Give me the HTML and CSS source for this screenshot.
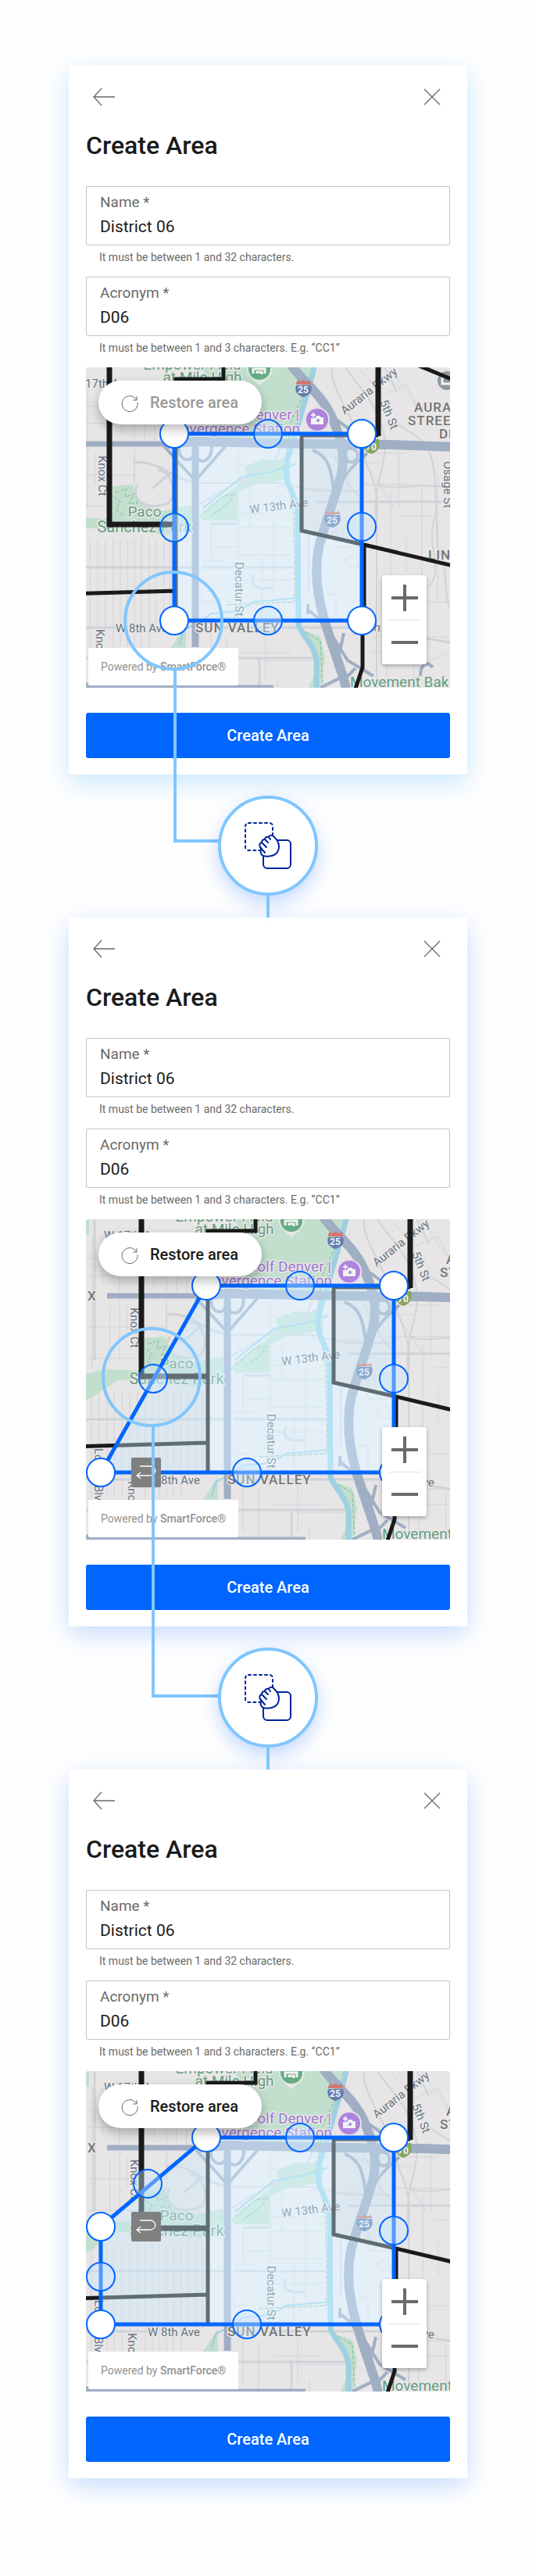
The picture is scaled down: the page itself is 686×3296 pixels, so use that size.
FILE: index.html
```html
<!DOCTYPE html>
<html lang="en">
<head>
<meta charset="utf-8">
<meta name="viewport" content="width=device-width, initial-scale=1">
<title>Create Area</title>
<link rel="stylesheet" href="styles.css">
</head>
<body>

<template id="city-map">
  <svg>
    <g class="city">
      <rect class="land" x="-60" y="-10" width="560" height="430"/>
      <!-- parks -->
      <path class="park" d="M150 -5H296C288 30 278 60 268 96H170L160 60Z"/>
      <path class="park" d="M34 152L60 150L64 166L78 178L100 184L135 176V208L100 214L40 206H0L-41 233V198L-14 192L34 194Z"/>
      <path class="park" d="M-41 -5H-37V20H-41ZM144 190L206 140L202 128L225 118L262 118V142L215 150L194 160V196L150 196Z"/>
      <path class="park" d="M108 360L120 342L128 330V360ZM272 334L300 344L306 370L300 412H284L298 380L290 352Z"/>
      <path class="trail" d="M38 160L52 155L50 166L62 162L55 175L66 172L60 186L70 190M36 166L44 172L38 182L48 190M150 186L175 165L192 162L180 176L160 190M290 10L276 40L262 70L255 120L266 190L268 285L266 300L180 304M276 336L300 350L303 410"/>
      <!-- side streets -->
      <path class="street" d="M-33 20V190M-20 20V85M-10 110V185M2 20V180M12 110V150M46 20V85M62 20V145M75 20V95M88 70V98M102 75V98M62 112V150M-41 50H40M-41 72H110M-41 138H62M-41 178H30M34 60H100"/>
      <path class="street" d="M-34 220V358M-24 220V358M-14 220V358M-5 220V358M5 220V358M15 220V358M25 220V340M35 220V358M44 220V358M53 220V358M62 220V358M71 220V358M81 220V358M90 220V340M100 220V340M108 220V330"/>
      <path class="street" d="M160 200V245M160 230H196M148 247H175M195 105V245M195 125L270 122M210 145V205M196 187H230M240 190V300M196 205H262M196 240H262M225 245V325M196 272H262M148 290V300H165M148 320H196M160 340V400M180 345V410M230 340V400M200 365H262M230 375H290M245 395V410"/>
      <path class="street" d="M348 0L380 35L410 22L425 52L460 48M385 -5L430 60M330 122H380M345 150H430M290 155H310M400 90V180M430 150V325M330 172H466M390 160V270M410 110H370M450 140V300M405 190H440M320 205V230M320 230H350M330 245L345 240L350 255H335ZM300 290H320V325M370 345H466M385 345V410M420 350V410M365 365H430M430 380L466 365M410 215V262M362 130L395 180M400 300H466"/>
      <path class="curve" d="M62 122C95 118 105 142 138 147M66 150C55 170 80 185 105 174C118 165 110 130 92 132M85 155L108 135M215 265C208 280 220 285 240 282"/>
      <path class="avenue" d="M-41 256H139M148 256H270M160 200H195M150 333H350M-41 333H40M150 372H300M295 172H466M-30 0V180M-40 372H60M222 372V410M350 333L466 352"/>
      <path class="rail" d="M315 -5C310 30 345 60 355 110C365 140 376 160 372 190V410M330 -5C340 20 375 40 382 90C386 130 365 150 372 200M372 150C400 160 425 145 466 155M395 70L425 90C452 110 446 150 450 230C466 260 455 280 466 310M440 280C460 250 430 230 450 180M380 -5L398 32M138 148H230C260 146 280 160 310 158H350M315 110C330 130 330 150 350 165M285 210V290M300 225V330M230 150L262 70M120 190L195 146L265 110"/>
      <!-- river and creek -->
      <path class="river" d="M293 -5C288 20 276 55 267 90C258 115 252 130 259 150C266 165 271 175 271 190L272 330C276 342 293 356 295 375V415"/>
      <path class="creek" d="M271 295L240 298L215 300L196 312L160 315L148 325L125 336L120 355M268 124L235 134L200 140L150 180"/>
      <!-- highways -->
      <path class="highway" d="M-14 98H110"/>
      <path class="highway highway--wide" d="M105 98L140 95L290 98L390 99L470 102"/>
      <path class="highway highway--mid" d="M140 92V358M-41 408H60L130 411H240"/>
      <path class="highway highway--ramp" d="M100 101L140 145L182 97M120 100C115 120 138 125 138 108M160 98C165 120 142 128 141 110"/>
      <path class="highway highway--wide" d="M258 -10C270 12 300 32 314 62C324 85 334 110 326 140C316 175 306 200 298 230C290 270 300 310 312 345C320 370 330 395 334 415"/>
      <path class="highway highway--ramp" d="M318 65L345 85M290 106C315 115 314 140 318 162M344 105C352 112 345 125 336 120C328 112 330 100 344 105M360 110C335 130 322 150 318 170M308 330L284 310M308 332L335 375L368 395M320 385L330 340M330 395L300 410M345 385L330 400M428 395C428 380 436 375 444 384M284 303V316M306 200L318 203"/>

      <!-- place names -->
      <g class="label">
        <text x="-18" y="26" font-size="15">W 17th Ave</text>
        <text transform="translate(16 113) rotate(90)" font-size="15">Knox Ct</text>
        <text transform="translate(13 335) rotate(90)" font-size="15">Knox Ct</text>
        <text transform="translate(-30 293) rotate(90)" font-size="15">Lowell Blvd</text>
        <text transform="translate(191 249) rotate(90)" font-size="15">Decatur St</text>
        <text transform="translate(210 187) rotate(-7)" font-size="15">W 13th Ave</text>
        <text x="38" y="339" font-size="15">W 8th Ave</text>
        <text transform="translate(338 333) rotate(8)" font-size="15">W 8th Ave</text>
        <text transform="translate(331 61) rotate(-38)" font-size="15">Auraria Pkwy</text>
        <text transform="translate(376 44) rotate(68)" font-size="15">5th St</text>
        <text transform="translate(458 120) rotate(90)" font-size="15">Osage St</text>
      </g>
      <g class="label label--park">
        <text x="136" y="3" font-size="19" text-anchor="middle">Empower Field</text>
        <text x="149" y="19" font-size="19" text-anchor="middle">at Mile High</text>
        <text x="75" y="191" font-size="19" text-anchor="middle">Paco</text>
        <text x="75" y="211" font-size="20" text-anchor="middle">Sanchez Park</text>
        <text x="338" y="409" font-size="19">Movement Bak</text>
      </g>
      <g class="label label--poi">
        <text x="273" y="67" font-size="19" text-anchor="end">Meow Wolf Denver |</text>
        <text x="274" y="85" font-size="19" text-anchor="end">Convergence Station</text>
      </g>
      <g class="label label--district">
        <text x="140" y="339" font-size="17">SUN VALLEY</text>
        <text x="420" y="57" font-size="17">AURA</text>
        <text x="412" y="74" font-size="17">STREE</text>
        <text x="452" y="91" font-size="17">DI</text>
        <text x="438" y="246" font-size="17">LIN</text>
        <text x="-39" y="104" font-size="17">X</text>
      </g>

      <!-- route shields -->
      <g class="shield" transform="translate(268 15)">
        <path fill="#db8078" d="M1 5L3 1L6 3L10 1L15 3L18 1L20 5V7H1Z"/>
        <path fill="#6784bd" d="M1 8H20C23 17 17 21 10 23C4 21 -2 17 1 8Z"/>
        <text x="10" y="18">25</text>
      </g>
      <g class="shield" transform="translate(305 183)">
        <path fill="#db8078" d="M1 4L3 1L6 3L10 1L15 3L18 1L20 4V5H1Z"/>
        <path fill="#6784bd" d="M1 6H20C23 16 17 20 10 22C4 20 -2 16 1 6Z"/>
        <text x="10" y="17">25</text>
      </g>
      <g class="shield" transform="translate(355 89)">
        <path fill="#8fae6b" d="M1 3H20C23 15 17 20 10 22C4 20 -2 15 1 3Z"/>
        <text x="10" y="17">70</text>
      </g>
      <!-- place pins -->
      <circle cx="296" cy="67" r="16" fill="#f3ecf8"/>
      <circle cx="296" cy="67" r="14" fill="#b88be8"/>
      <path fill="#fff" d="M288 65H293L295 62H299L301 64H304V73H288ZM288 60H290V58H292V60H294V62H292V64H290V62H288Z"/>
      <circle cx="297" cy="68" r="2" fill="#b88be8"/>
      <path fill="#f2f6f3" d="M206 1H239C239 12 229 16 222 23C215 16 206 12 206 1Z"/>
      <circle cx="222" cy="2" r="14" fill="#6cb58c"/>
      <path fill="none" stroke="#fff" stroke-width="3" d="M214 8V2H229V8M219 8V6H225V9"/>
      <circle cx="462" cy="17" r="15" fill="#f1f1f1"/>
      <circle cx="462" cy="17" r="12" fill="#98a1a8"/>
      <path fill="none" stroke="#fff" stroke-width="3" d="M456 10V21H470"/>

      <!-- neighbouring districts, dimmed around the free block -->
      <path class="dim" fill-rule="evenodd" d="M-60 -10H500V420H-60ZM115 87V324H356V227L276 209V87Z"/>
      <path class="border border--bold" d="M30 -10V201H115M374 -10V88"/>
      <path class="border" d="M115 324V15H176V-10M374 87H276V209L356 227L470 254M356 227V324L354 343V384L344 414M-60 291L115 286M424 -3L470 16"/>
    </g>
  </svg>
</template>

<main class="flow">

  <section class="card card--sky">
    <header class="card__bar">
      <button class="icon-button" type="button" aria-label="Back"><svg width="32" height="28" viewBox="0 0 32 28"><path d="M30 14H3M13 3L3 14L13 25"/></svg></button>
      <button class="icon-button" type="button" aria-label="Close"><svg width="32" height="28" viewBox="0 0 32 28"><path d="M6 4L26 24M26 4L6 24"/></svg></button>
    </header>
    <h2 class="card__title">Create Area</h2>
    <div class="field"><label for="name-1">Name *</label><input id="name-1" type="text" value="District 06"></div>
    <p class="hint">It must be between 1 and 32 characters.</p>
    <div class="field"><label for="acronym-1">Acronym *</label><input id="acronym-1" type="text" value="D06"></div>
    <p class="hint">It must be between 1 and 3 characters. E.g. “CC1”</p>
    <div class="map">
      <svg class="map__art" viewBox="0 0 466 410" preserveAspectRatio="xMidYMid slice">
        <path class="area" d="M113 85H353V324H113Z"/>
        <g class="corner"><circle cx="113" cy="85" r="18"/><circle cx="353" cy="85" r="18"/><circle cx="353" cy="324" r="18"/><circle cx="113" cy="324" r="18"/></g>
        <g class="middle"><circle cx="233" cy="85" r="18"/><circle cx="353" cy="204" r="18"/><circle cx="233" cy="324" r="18"/><circle cx="113" cy="205" r="18"/></g>
      </svg>
      <button class="restore" type="button" disabled><svg width="24" height="24" viewBox="0 0 24 24"><path d="M21 9A10 10 0 1 0 22 12M21 4V9H16"/></svg>Restore area</button>
      <p class="credit">Powered by <strong>SmartForce®</strong></p>
      <div class="zoom">
        <button type="button" aria-label="Zoom in"><svg width="34" height="34" viewBox="0 0 34 34"><path d="M0 17H34M17 0V34"/></svg></button>
        <button type="button" aria-label="Zoom out"><svg width="34" height="34" viewBox="0 0 34 34"><path d="M0 17H34"/></svg></button>
      </div>
      <span class="focus focus--corner"></span>
    </div>
    <button class="submit" type="button">Create Area</button>
  </section>

  <div class="link">
    <span class="leader leader--corner"></span>
    <span class="badge"><svg width="64" height="64" viewBox="0 0 64 64" role="img" aria-label="Drag"><rect class="dashed" x="3" y="3" width="35" height="35" rx="4"/><rect x="26" y="25" width="35" height="36" rx="5"/><path fill="#fff" d="M38 19C35 18 33 20 33 21C30 20 28 22 28 24C25 24 24 26 24 28C21 29 20 32 23 35C22 42 23 45 28 45.500C39 47 46 42 46 33C46 27 43 24 38 19Z"/><path d="M33 21L35 24M28 24L32 28M24 28L30 34M22 34L28 41"/></svg></span>
    <span class="stem"></span>
  </div>

  <section class="card">
    <header class="card__bar">
      <button class="icon-button" type="button" aria-label="Back"><svg width="32" height="28" viewBox="0 0 32 28"><path d="M30 14H3M13 3L3 14L13 25"/></svg></button>
      <button class="icon-button" type="button" aria-label="Close"><svg width="32" height="28" viewBox="0 0 32 28"><path d="M6 4L26 24M26 4L6 24"/></svg></button>
    </header>
    <h2 class="card__title">Create Area</h2>
    <div class="field"><label for="name-2">Name *</label><input id="name-2" type="text" value="District 06"></div>
    <p class="hint">It must be between 1 and 32 characters.</p>
    <div class="field"><label for="acronym-2">Acronym *</label><input id="acronym-2" type="text" value="D06"></div>
    <p class="hint">It must be between 1 and 3 characters. E.g. “CC1”</p>
    <div class="map map--panned">
      <svg class="map__art" viewBox="0 0 466 410" preserveAspectRatio="xMidYMid slice">
        <path class="area" d="M154 85H394V324H19Z"/>
        <g class="corner"><circle cx="154" cy="85" r="18"/><circle cx="394" cy="85" r="18"/><circle cx="394" cy="324" r="18"/><circle cx="19" cy="324" r="18"/></g>
        <g class="middle"><circle cx="274" cy="85" r="18"/><circle cx="394" cy="204" r="18"/><circle cx="206" cy="324" r="18"/><circle cx="86" cy="204" r="18"/></g>
      </svg>
      <button class="restore" type="button"><svg width="24" height="24" viewBox="0 0 24 24"><path d="M21 9A10 10 0 1 0 22 12M21 4V9H16"/></svg>Restore area</button>
      <button class="undo undo--bottom" type="button" aria-label="Undo"><svg width="26" height="18" viewBox="0 0 26 18"><path d="M5 1H18C27 1 27 13 18 13H2M6 9L1 13L6 17"/></svg></button>
      <p class="credit">Powered by <strong>SmartForce®</strong></p>
      <div class="zoom">
        <button type="button" aria-label="Zoom in"><svg width="34" height="34" viewBox="0 0 34 34"><path d="M0 17H34M17 0V34"/></svg></button>
        <button type="button" aria-label="Zoom out"><svg width="34" height="34" viewBox="0 0 34 34"><path d="M0 17H34"/></svg></button>
      </div>
      <span class="focus focus--middle"></span>
    </div>
    <button class="submit" type="button">Create Area</button>
  </section>

  <div class="link">
    <span class="leader leader--middle"></span>
    <span class="badge"><svg width="64" height="64" viewBox="0 0 64 64" role="img" aria-label="Drag"><rect class="dashed" x="3" y="3" width="35" height="35" rx="4"/><rect x="26" y="25" width="35" height="36" rx="5"/><path fill="#fff" d="M38 19C35 18 33 20 33 21C30 20 28 22 28 24C25 24 24 26 24 28C21 29 20 32 23 35C22 42 23 45 28 45.500C39 47 46 42 46 33C46 27 43 24 38 19Z"/><path d="M33 21L35 24M28 24L32 28M24 28L30 34M22 34L28 41"/></svg></span>
    <span class="stem"></span>
  </div>

  <section class="card">
    <header class="card__bar">
      <button class="icon-button" type="button" aria-label="Back"><svg width="32" height="28" viewBox="0 0 32 28"><path d="M30 14H3M13 3L3 14L13 25"/></svg></button>
      <button class="icon-button" type="button" aria-label="Close"><svg width="32" height="28" viewBox="0 0 32 28"><path d="M6 4L26 24M26 4L6 24"/></svg></button>
    </header>
    <h2 class="card__title">Create Area</h2>
    <div class="field"><label for="name-3">Name *</label><input id="name-3" type="text" value="District 06"></div>
    <p class="hint">It must be between 1 and 32 characters.</p>
    <div class="field"><label for="acronym-3">Acronym *</label><input id="acronym-3" type="text" value="D06"></div>
    <p class="hint">It must be between 1 and 3 characters. E.g. “CC1”</p>
    <div class="map map--panned">
      <svg class="map__art" viewBox="0 0 466 410" preserveAspectRatio="xMidYMid slice">
        <path class="area" d="M154 85H394V324H19V199Z"/>
        <g class="corner"><circle cx="154" cy="85" r="18"/><circle cx="394" cy="85" r="18"/><circle cx="394" cy="324" r="18"/><circle cx="19" cy="324" r="18"/><circle cx="19" cy="199" r="18"/></g>
        <g class="middle"><circle cx="274" cy="85" r="18"/><circle cx="394" cy="204" r="18"/><circle cx="206" cy="324" r="18"/><circle cx="19" cy="263" r="18"/><circle cx="79" cy="144" r="18"/></g>
      </svg>
      <button class="restore" type="button"><svg width="24" height="24" viewBox="0 0 24 24"><path d="M21 9A10 10 0 1 0 22 12M21 4V9H16"/></svg>Restore area</button>
      <button class="undo undo--side" type="button" aria-label="Undo"><svg width="26" height="18" viewBox="0 0 26 18"><path d="M5 1H18C27 1 27 13 18 13H2M6 9L1 13L6 17"/></svg></button>
      <p class="credit">Powered by <strong>SmartForce®</strong></p>
      <div class="zoom">
        <button type="button" aria-label="Zoom in"><svg width="34" height="34" viewBox="0 0 34 34"><path d="M0 17H34M17 0V34"/></svg></button>
        <button type="button" aria-label="Zoom out"><svg width="34" height="34" viewBox="0 0 34 34"><path d="M0 17H34"/></svg></button>
      </div>
    </div>
    <button class="submit" type="button">Create Area</button>
  </section>

</main>
<script src="map.js"></script>
</body>
</html>
```

FILE: styles.css
```css
* { box-sizing: border-box; }

body {
  margin: 0;
  background: #fefefe;
  color: #1a1a1a;
  font-family: Roboto, "Liberation Sans", sans-serif;
}

h2, p { margin: 0; }

button {
  padding: 0;
  border: 0;
  background: none;
  font: inherit;
}

svg { display: block; }

.flow {
  max-width: 900px;
  margin: 0 auto;
  padding: 84px 88px 125px;
}

/* Card */
.card {
  padding: 26px 22px 21px;
  background: #fff;
  box-shadow: 0 10px 30px rgba(0, 102, 255, .22);
}

.card--sky { box-shadow: 0 10px 30px rgba(0, 150, 255, .22); }

.card__bar {
  display: flex;
  justify-content: space-between;
  padding: 0 7px;
}

.icon-button svg {
  fill: none;
  stroke: #6a6a6a;
  stroke-width: 1.3;
}

.card__title {
  margin: 28px 0 32px;
  font-size: 32px;
  font-weight: 500;
  line-height: 40px;
}

.field {
  height: 76px;
  padding: 8px 17px 0;
  border: 1px solid #c4c4c4;
  border-radius: 2px;
}

.field label {
  display: block;
  color: #6a6a6a;
  font-size: 19px;
  line-height: 24px;
}

.field input {
  display: block;
  width: 100%;
  height: 38px;
  padding: 0;
  border: 0;
  outline: 0;
  background: none;
  color: #1a1a1a;
  font: 21px/38px Roboto, "Liberation Sans", sans-serif;
}

.hint {
  margin: 5px 0 15px;
  padding: 0 17px;
  color: #6a6a6a;
  font-size: 14px;
  line-height: 20px;
}

.submit {
  width: 100%;
  height: 58px;
  border-radius: 3px;
  background: #0066ff;
  color: #fff;
  font-size: 20px;
  font-weight: 500;
}

/* Map */
.map {
  position: relative;
  height: 410px;
  margin-bottom: 32px;
  overflow: hidden;
  border-radius: 3px 3px 0 0;
}

.map__art {
  width: 100%;
  height: 100%;
}

.map--panned .city { transform: translateX(41px); }

.land { fill: #f4f2f3; }
.park { fill: #cdebd8; }
.dim { fill: rgba(0, 0, 0, .05); }

.trail, .street, .curve, .avenue, .rail, .river, .creek, .highway, .border { fill: none; }
.trail { stroke: #86c4a0; stroke-width: 1; stroke-dasharray: 5 2; }
.street { stroke: #d9e0e4; stroke-width: 1; }
.curve { stroke: #d9dfe3; stroke-width: 3; }
.avenue { stroke: #d9dfe3; stroke-width: 3; }
.rail { stroke: #dcdfe1; stroke-width: 2; }
.river { stroke: #a6dcee; stroke-width: 7; }
.creek { stroke: #a6dcee; stroke-width: 2; }
.highway { stroke: #a9b8cf; stroke-width: 7; }
.highway--mid { stroke-width: 9; }
.highway--wide { stroke-width: 12; }
.highway--ramp { stroke-width: 4; }

.border { stroke: #1a1a1a; stroke-width: 5; }
.border--bold { stroke-width: 7; }

.label {
  fill: #6f7b88;
  stroke: #f6f6f6;
  stroke-width: 3px;
  stroke-linejoin: round;
  paint-order: stroke;
}

.label--park { fill: #6ba588; }
.label--poi { fill: #a97fdb; }
.label--district { fill: #7b7b7b; font-weight: 500; letter-spacing: 1px; }

.shield text {
  fill: #fff;
  font-size: 12px;
  font-weight: 700;
  text-anchor: middle;
}

.area {
  fill: rgba(204, 236, 255, .4);
  stroke: #0066ff;
  stroke-width: 5;
}

.corner { fill: #fff; stroke: #0066ff; stroke-width: 2; }
.middle { fill: rgba(204, 232, 255, .4); stroke: #0066ff; stroke-width: 2; }

.restore {
  position: absolute;
  top: 17px;
  left: 16px;
  display: flex;
  align-items: center;
  gap: 14px;
  height: 56px;
  padding: 0 30px 0 28px;
  border-radius: 28px;
  background: #fff;
  box-shadow: 0 6px 14px rgba(0, 0, 0, .28);
  color: #1a1a1a;
  font-size: 20px;
  font-weight: 500;
}

.restore:disabled { color: #999; }
.restore svg { fill: none; stroke: #6a6a6a; stroke-width: 1; }

.credit {
  position: absolute;
  bottom: 3px;
  left: 3px;
  padding: 0 16px;
  border-radius: 2px;
  background: #fff;
  color: #919191;
  font-size: 14px;
  line-height: 48px;
}

.credit strong { font-weight: 500; }

.zoom {
  position: absolute;
  right: 30px;
  bottom: 30px;
  width: 57px;
  padding: 0 8px;
  border-radius: 3px;
  background: #fff;
  box-shadow: 0 2px 5px rgba(0, 0, 0, .3);
}

.zoom button {
  display: grid;
  place-items: center;
  width: 100%;
  height: 57px;
}

.zoom button + button { border-top: 1px solid #e2e2e2; }
.zoom svg { fill: none; stroke: #6a6a6a; stroke-width: 4; }

.undo {
  position: absolute;
  left: 58px;
  display: grid;
  place-items: center;
  width: 38px;
  height: 38px;
  border-radius: 2px;
  background: #808080;
}

.undo--bottom { top: 305px; }
.undo--side { top: 180px; }
.undo svg { fill: none; stroke: #fff; stroke-width: 1.3; }

.focus {
  position: absolute;
  width: 128px;
  height: 128px;
  border: 4px solid #80c6ff;
  border-radius: 50%;
}

.focus--corner { top: 260px; left: 48px; }
.focus--middle { top: 138px; left: 20px; }

/* Link between two steps */
.link {
  position: relative;
  display: flex;
  flex-direction: column;
  align-items: center;
  height: 183px;
  padding-top: 27px;
}

.leader {
  position: absolute;
  right: 50%;
  border: solid #80c6ff;
  border-width: 0 0 4px 4px;
}

.leader--corner { top: -133px; left: 134px; height: 220px; }
.leader--middle { top: -255px; left: 106px; height: 346px; }

.badge {
  position: relative;
  display: grid;
  place-items: center;
  width: 128px;
  height: 128px;
  border: 4px solid #80c6ff;
  border-radius: 50%;
  background: #fff;
  box-shadow: 0 10px 24px rgba(0, 102, 255, .24);
}

.badge svg { fill: none; stroke: #00239c; stroke-width: 2; stroke-linecap: round; }
.badge .dashed { stroke-dasharray: 3 4; }

.stem {
  position: relative;
  flex: 1;
  width: 4px;
  background: #80c6ff;
}
```

FILE: map.js
```js
// Every step shows the same city, so the drawing is kept once in a template.
const city = document.querySelector("#city-map").content.querySelector(".city");
document.querySelectorAll(".map__art").forEach((art) => {
  art.prepend(document.importNode(city, true));
});
```
